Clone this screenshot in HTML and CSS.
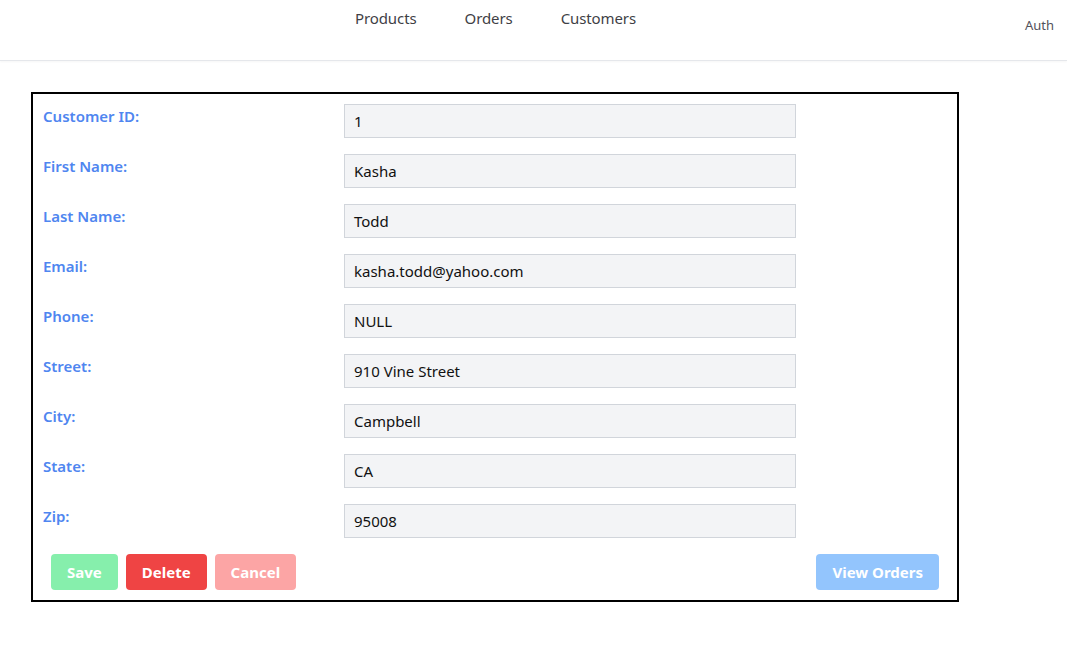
FILE: index.html
```html
<!DOCTYPE html>
<html>
<head>
<meta charset="utf-8">
<link rel="stylesheet" href="styles.css">
</head>
<body>
<header class="topbar">
  <nav class="nav">
    <a class="nav-link">Products</a>
    <a class="nav-link">Orders</a>
    <a class="nav-link">Customers</a>
  </nav>
  <a class="auth">Auth</a>
</header>
<main class="main">
  <form class="card">
    <div class="row"><label class="label">Customer ID:</label><div class="field">1</div></div>
    <div class="row"><label class="label">First Name:</label><div class="field">Kasha</div></div>
    <div class="row"><label class="label">Last Name:</label><div class="field">Todd</div></div>
    <div class="row"><label class="label">Email:</label><div class="field">kasha.todd@yahoo.com</div></div>
    <div class="row"><label class="label">Phone:</label><div class="field">NULL</div></div>
    <div class="row"><label class="label">Street:</label><div class="field">910 Vine Street</div></div>
    <div class="row"><label class="label">City:</label><div class="field">Campbell</div></div>
    <div class="row"><label class="label">State:</label><div class="field">CA</div></div>
    <div class="row"><label class="label">Zip:</label><div class="field">95008</div></div>
    <div class="actions">
      <div class="group">
        <button type="button" class="btn btn-save">Save</button>
        <button type="button" class="btn btn-delete">Delete</button>
        <button type="button" class="btn btn-cancel">Cancel</button>
      </div>
      <button type="button" class="btn btn-orders">View Orders</button>
    </div>
  </form>
</main>
</body>
</html>
```
FILE: styles.css
```css
* { box-sizing: border-box; }
body {
  margin: 0;
  font-family: "Noto Sans", "Open Sans", sans-serif;
  background: #fff;
  color: #111;
}
.topbar {
  height: 61px;
  display: flex;
  align-items: flex-start;
  border-bottom: 1px solid #e5e7eb;
  box-shadow: 0 1px 2px rgba(0,0,0,0.04);
}
.nav {
  display: flex;
  gap: 48px;
  margin-left: 355px;
  padding-top: 8px;
}
.nav-link {
  font-size: 15px;
  letter-spacing: -0.1px;
  color: #3f3f46;
  line-height: 20px;
}
.auth {
  margin-left: auto;
  margin-right: 13px;
  padding-top: 16px;
  font-size: 13px;
  line-height: 18px;
  color: #52525b;
}
.main {
  padding: 31px 0 0 31px;
}
.card {
  width: 928px;
  border: 2px solid #000;
  padding: 10px 18px 10px 10px;
}
.row {
  display: flex;
  height: 50px;
}
.label {
  width: 301px;
  font-size: 15px;
  font-weight: 600;
  color: #4f86f0;
  line-height: 20px;
  padding-top: 2px;
}
.field {
  width: 452px;
  height: 34px;
  background: #f3f4f6;
  border: 1px solid #d1d5db;
  padding: 0 9px;
  font-size: 15px;
  line-height: 32px;
  color: #111;
}
.actions {
  display: flex;
  justify-content: space-between;
  padding: 0 0 0 8px;
}
.group {
  display: flex;
  gap: 8px;
}
.btn {
  height: 36px;
  border: 0;
  border-radius: 4px;
  padding: 0 16px;
  font-family: inherit;
  font-size: 15px;
  font-weight: 700;
  color: #fff;
}
.btn-save { background: #86efac; }
.btn-delete { background: #ef4444; }
.btn-cancel { background: #fca5a5; }
.btn-orders { background: #93c5fd; }
```
